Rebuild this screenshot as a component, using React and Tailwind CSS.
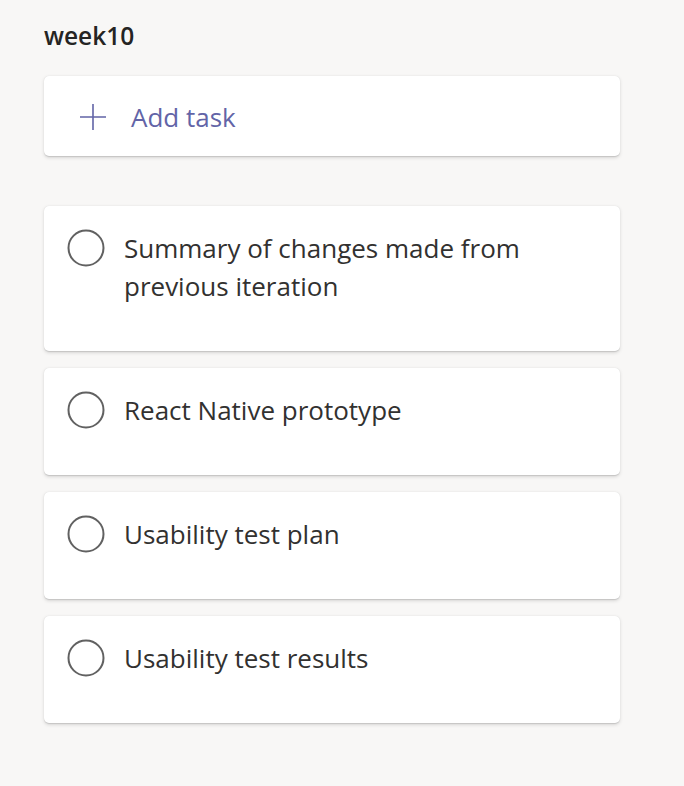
import React from 'react';

const tasks = [
  'Summary of changes made from previous iteration',
  'React Native prototype',
  'Usability test plan',
  'Usability test results',
];

const Circle = () => (
  <svg width="38" height="38" viewBox="0 0 38 38" className="shrink-0">
    <circle cx="19" cy="19" r="17.5" fill="none" stroke="#616161" strokeWidth="2" />
  </svg>
);

const TaskCard = ({ title }) => (
  <div className="bg-white rounded-[5px] shadow-[0_1.6px_3.6px_rgba(0,0,0,0.13),0_0.3px_0.9px_rgba(0,0,0,0.11)] pl-[23px] pr-6 pt-[23px] pb-[46px] flex items-start gap-[19px]">
    <Circle />
    <div className="text-[26px] leading-[38px] text-[#323130]">{title}</div>
  </div>
);

export default function App() {
  return (
    <div
      className="min-h-[786px] w-full bg-[#f8f7f6] px-[44px] pt-[20px]"
      style={{ fontFamily: '"Open Sans", "Noto Sans", sans-serif' }}
    >
      <div className="w-[576px]">
        <h2 className="text-[24.5px] font-semibold text-[#252423] leading-[32px]">week10</h2>
        <div className="mt-[24px] bg-white rounded-[5px] shadow-[0_1.6px_3.6px_rgba(0,0,0,0.13),0_0.3px_0.9px_rgba(0,0,0,0.11)] h-[80px] flex items-center pl-[35px] gap-[24px] text-[#6264a7]">
          <svg width="28" height="28" viewBox="0 0 28 28" className="mt-[2px]">
            <path d="M14 1v26M1 14h26" stroke="#6264a7" strokeWidth="1.6" fill="none" />
          </svg>
          <span className="text-[26px] leading-[36px] mt-[2px]">Add task</span>
        </div>
        <div className="mt-[50px] flex flex-col gap-[17px]">
          {tasks.map((t) => (
            <TaskCard key={t} title={t} />
          ))}
        </div>
      </div>
    </div>
  );
}
